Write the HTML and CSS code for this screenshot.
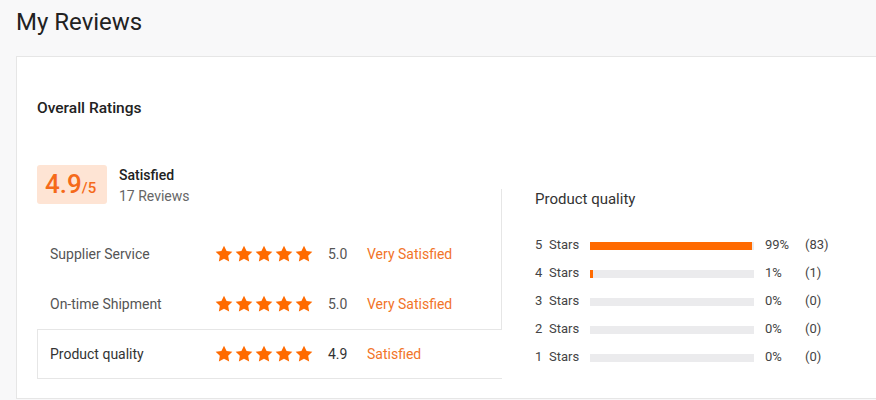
FILE: index.html
```html
<!DOCTYPE html>
<html lang="en">
<head>
<meta charset="utf-8">
<title>My Reviews</title>
<link rel="stylesheet" href="styles.css">
</head>
<body>
<div class="page">
  <div class="header"><h1 class="title">My Reviews</h1></div>
  <div class="card">
    <h2 class="section-title">Overall Ratings</h2>
    <div class="ratings">
      <div class="left-col">
        <div class="summary">
          <div class="score-box"><span class="score-big">4.9</span><span class="score-small">/5</span></div>
          <div class="summary-text">
            <div class="summary-label">Satisfied</div>
            <div class="summary-count">17 Reviews</div>
          </div>
        </div>
        <div class="rows">
          <div class="row">
            <span class="row-label">Supplier Service</span>
            <span class="stars">
              <svg viewBox="0 0 24 24"><polygon points="12,2 15.09,8.26 22,9.27 17,14.14 18.18,21.02 12,17.77 5.82,21.02 7,14.14 2,9.27 8.91,8.26"/></svg>
              <svg viewBox="0 0 24 24"><polygon points="12,2 15.09,8.26 22,9.27 17,14.14 18.18,21.02 12,17.77 5.82,21.02 7,14.14 2,9.27 8.91,8.26"/></svg>
              <svg viewBox="0 0 24 24"><polygon points="12,2 15.09,8.26 22,9.27 17,14.14 18.18,21.02 12,17.77 5.82,21.02 7,14.14 2,9.27 8.91,8.26"/></svg>
              <svg viewBox="0 0 24 24"><polygon points="12,2 15.09,8.26 22,9.27 17,14.14 18.18,21.02 12,17.77 5.82,21.02 7,14.14 2,9.27 8.91,8.26"/></svg>
              <svg viewBox="0 0 24 24"><polygon points="12,2 15.09,8.26 22,9.27 17,14.14 18.18,21.02 12,17.77 5.82,21.02 7,14.14 2,9.27 8.91,8.26"/></svg>
            </span>
            <span class="row-score">5.0</span>
            <span class="row-verdict">Very Satisfied</span>
          </div>
          <div class="row">
            <span class="row-label">On-time Shipment</span>
            <span class="stars">
              <svg viewBox="0 0 24 24"><polygon points="12,2 15.09,8.26 22,9.27 17,14.14 18.18,21.02 12,17.77 5.82,21.02 7,14.14 2,9.27 8.91,8.26"/></svg>
              <svg viewBox="0 0 24 24"><polygon points="12,2 15.09,8.26 22,9.27 17,14.14 18.18,21.02 12,17.77 5.82,21.02 7,14.14 2,9.27 8.91,8.26"/></svg>
              <svg viewBox="0 0 24 24"><polygon points="12,2 15.09,8.26 22,9.27 17,14.14 18.18,21.02 12,17.77 5.82,21.02 7,14.14 2,9.27 8.91,8.26"/></svg>
              <svg viewBox="0 0 24 24"><polygon points="12,2 15.09,8.26 22,9.27 17,14.14 18.18,21.02 12,17.77 5.82,21.02 7,14.14 2,9.27 8.91,8.26"/></svg>
              <svg viewBox="0 0 24 24"><polygon points="12,2 15.09,8.26 22,9.27 17,14.14 18.18,21.02 12,17.77 5.82,21.02 7,14.14 2,9.27 8.91,8.26"/></svg>
            </span>
            <span class="row-score">5.0</span>
            <span class="row-verdict">Very Satisfied</span>
          </div>
          <div class="row row-active">
            <span class="row-label">Product quality</span>
            <span class="stars">
              <svg viewBox="0 0 24 24"><polygon points="12,2 15.09,8.26 22,9.27 17,14.14 18.18,21.02 12,17.77 5.82,21.02 7,14.14 2,9.27 8.91,8.26"/></svg>
              <svg viewBox="0 0 24 24"><polygon points="12,2 15.09,8.26 22,9.27 17,14.14 18.18,21.02 12,17.77 5.82,21.02 7,14.14 2,9.27 8.91,8.26"/></svg>
              <svg viewBox="0 0 24 24"><polygon points="12,2 15.09,8.26 22,9.27 17,14.14 18.18,21.02 12,17.77 5.82,21.02 7,14.14 2,9.27 8.91,8.26"/></svg>
              <svg viewBox="0 0 24 24"><polygon points="12,2 15.09,8.26 22,9.27 17,14.14 18.18,21.02 12,17.77 5.82,21.02 7,14.14 2,9.27 8.91,8.26"/></svg>
              <svg viewBox="0 0 24 24"><polygon points="12,2 15.09,8.26 22,9.27 17,14.14 18.18,21.02 12,17.77 5.82,21.02 7,14.14 2,9.27 8.91,8.26"/></svg>
            </span>
            <span class="row-score">4.9</span>
            <span class="row-verdict">Satisfied</span>
          </div>
        </div>
      </div>
      <div class="detail">
        <div class="detail-title">Product quality</div>
        <div class="bars">
          <div class="bar-row">
            <span class="bar-label"><span class="bar-num">5</span>Stars</span>
            <span class="bar-track"><span class="bar-fill" style="width:99%"></span></span>
            <span class="bar-pct">99%</span>
            <span class="bar-count">(83)</span>
          </div>
          <div class="bar-row">
            <span class="bar-label"><span class="bar-num">4</span>Stars</span>
            <span class="bar-track"><span class="bar-fill" style="width:2%"></span></span>
            <span class="bar-pct">1%</span>
            <span class="bar-count">(1)</span>
          </div>
          <div class="bar-row">
            <span class="bar-label"><span class="bar-num">3</span>Stars</span>
            <span class="bar-track"></span>
            <span class="bar-pct">0%</span>
            <span class="bar-count">(0)</span>
          </div>
          <div class="bar-row">
            <span class="bar-label"><span class="bar-num">2</span>Stars</span>
            <span class="bar-track"></span>
            <span class="bar-pct">0%</span>
            <span class="bar-count">(0)</span>
          </div>
          <div class="bar-row">
            <span class="bar-label"><span class="bar-num">1</span>Stars</span>
            <span class="bar-track"></span>
            <span class="bar-pct">0%</span>
            <span class="bar-count">(0)</span>
          </div>
        </div>
      </div>
    </div>
  </div>
</div>
</body>
</html>
```

FILE: styles.css
```css
* { box-sizing: border-box; }
html, body { margin: 0; padding: 0; }
body {
  background: #f8f8f9;
  font-family: Roboto, "Liberation Sans", Arial, sans-serif;
  color: #333;
  width: 876px;
  height: 400px;
  overflow: hidden;
}
.page { padding-left: 16px; }
.header { height: 56px; padding-top: 6px; }
.title {
  margin: 0;
  font-size: 24px;
  line-height: 32px;
  font-weight: 400;
  color: #222;
}
.card {
  background: #fff;
  border: 1px solid #e6e6e6;
  border-right: none;
  padding: 41px 0 19px 20px;
}
.section-title {
  margin: 0;
  font-size: 15.5px;
  line-height: 20px;
  font-weight: 500;
  color: #222;
}
.ratings {
  display: flex;
  margin-top: 47px;
}
.left-col { width: 464px; flex: none; }
.summary { display: flex; align-items: flex-start; }
.score-box {
  width: 70px;
  height: 39px;
  background: #fee4d4;
  border-radius: 3px;
  padding-left: 8px;
  line-height: 39px;
  color: #f56a1a;
  white-space: nowrap;
}
.score-big { font-size: 26px; font-weight: 500; }
.score-small { font-size: 15px; font-weight: 500; }
.summary-text { margin-left: 12px; }
.summary-label {
  font-size: 14px;
  line-height: 20px;
  font-weight: 500;
  color: #222;
}
.summary-count {
  margin-top: 1px;
  font-size: 14px;
  line-height: 20px;
  color: #666;
}
.rows { margin-top: 23px; }
.row {
  display: flex;
  align-items: center;
  height: 50px;
  border: 1px solid transparent;
  padding-left: 12px;
  font-size: 14px;
  color: #555;
}
.row-active {
  position: relative;
  z-index: 1;
  background: #fff;
  border-color: #e6e6e6;
  border-right: none;
  margin-right: -1px;
  color: #333;
}
.row-label { width: 164px; flex: none; }
.stars { display: flex; flex: none; }
.stars svg { width: 20px; height: 20px; fill: #ff6a00; display: block; }
.row-score { margin-left: 14px; width: 39px; flex: none; }
.row-verdict { color: #f27428; }
.detail {
  flex: 1;
  margin-top: 24px;
  border-left: 1px solid #e6e6e6;
  padding-left: 33px;
}
.detail-title {
  font-size: 15px;
  line-height: 20px;
  color: #333;
}
.bars { margin-top: 21px; }
.bar-row {
  display: flex;
  align-items: center;
  height: 28px;
  font-size: 13px;
  color: #444;
}
.bar-label { width: 55px; flex: none; display: flex; }
.bar-num { width: 14px; }
.bar-track {
  width: 164px;
  height: 8px;
  background: #ebebed;
  flex: none;
  display: flex;
  margin-top: 3px;
}
.bar-fill { display: block; height: 100%; background: #ff6a00; }
.bar-pct { margin-left: 11px; width: 40px; flex: none; }
```
